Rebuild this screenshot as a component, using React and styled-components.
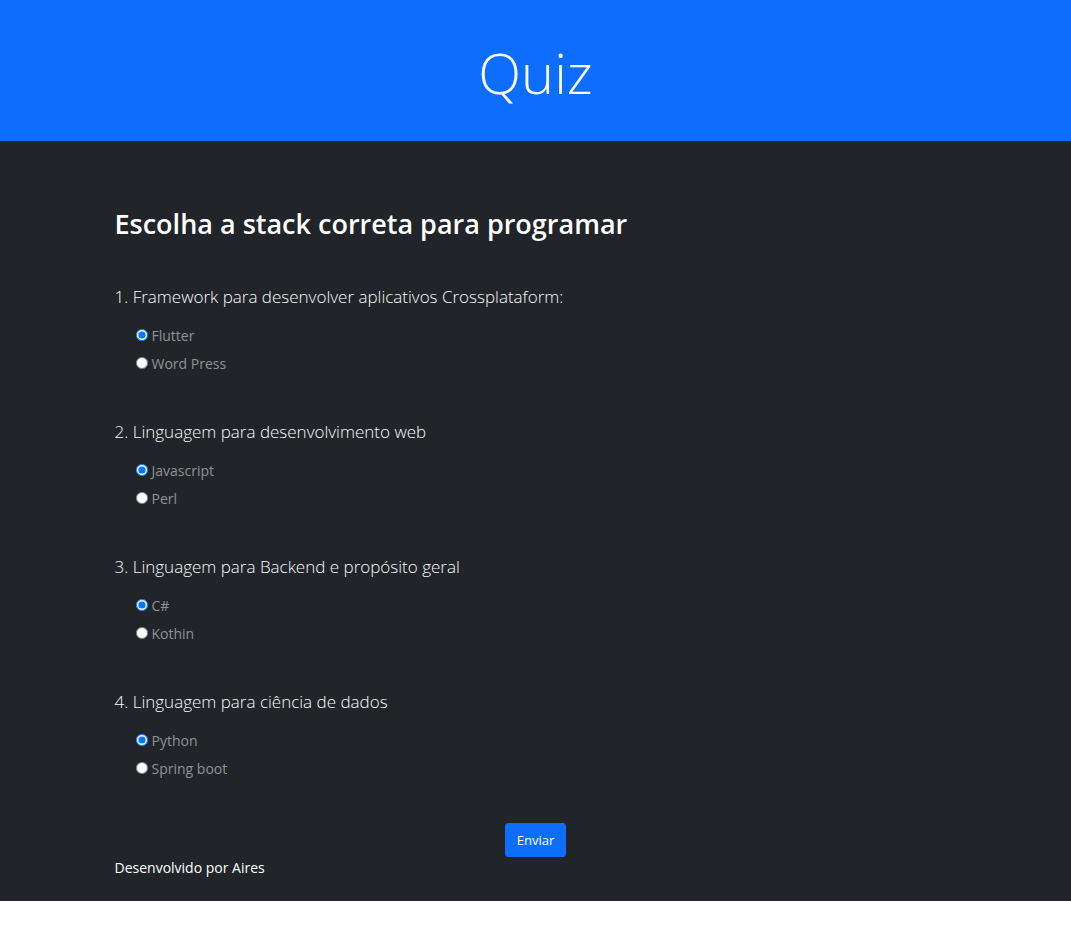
import React from "react";
import styled, { createGlobalStyle } from "styled-components";

const GlobalStyle = createGlobalStyle`
  *, *::before, *::after { box-sizing: border-box; }
  body {
    margin: 0;
    background: #fff;
    color: #fff;
    font-family: "Segoe UI", "Open Sans", "Noto Sans", sans-serif;
    font-size: 14px;
    line-height: 22px;
  }
  h1, h2, p, fieldset { margin: 0; padding: 0; border: 0; }
`;

const Header = styled.header`
  padding: 43px 12px 40px;
  background: #0d6efd;
  text-align: center;
`;

const Title = styled.h1`
  color: #f8f9fa;
  font-size: 56px;
  font-weight: 300;
  line-height: 58px;
`;

const Main = styled.main`
  padding: 64px 0 22px;
  background: #212529;
`;

const Container = styled.div`
  max-width: 864px;
  margin: 0 auto;
  padding: 0 11px;
`;

const Heading = styled.h2`
  font-size: 27px;
  font-weight: 600;
  line-height: 38px;
`;

const Form = styled.form`
  padding-top: 43px;
`;

const Questions = styled.div`
  display: flex;
  flex-direction: column;
  gap: 43px;
`;

const Question = styled.fieldset`
  min-width: 0;
`;

const Prompt = styled.legend`
  padding: 0;
  margin-bottom: 14px;
  color: #f8f9fa;
  font-size: 17px;
  font-weight: 300;
  line-height: 22px;
`;

const Option = styled.div`
  display: flex;
  align-items: center;
  gap: 4px;
  height: 28px;
  padding-left: 21px;
`;

const Radio = styled.input`
  width: 12px;
  height: 12px;
  margin: 0 0 2px;
`;

const OptionLabel = styled.label`
  color: #909294;
`;

const Actions = styled.div`
  display: flex;
  justify-content: center;
  padding-top: 40px;
`;

const SubmitButton = styled.button`
  padding: 5px 11px;
  border: 1px solid #0d6efd;
  border-radius: 3px;
  background: #0d6efd;
  color: #fff;
  font: inherit;
  font-size: 13px;
  cursor: pointer;
`;

const Credit = styled.p`
  font-size: 14px;
`;

const questions = [
  { prompt: "1. Framework para desenvolver aplicativos Crossplataform:", options: ["Flutter", "Word Press"] },
  { prompt: "2. Linguagem para desenvolvimento web", options: ["Javascript", "Perl"] },
  { prompt: "3. Linguagem para Backend e propósito geral", options: ["C#", "Kothin"] },
  { prompt: "4. Linguagem para ciência de dados", options: ["Python", "Spring boot"] },
];

export default function App() {
  return (
    <>
      <GlobalStyle />
      <Header>
        <Title>Quiz</Title>
      </Header>
      <Main>
        <Container>
          <Heading>Escolha a stack correta para programar</Heading>
          <Form onSubmit={(event) => event.preventDefault()}>
            <Questions>
              {questions.map(({ prompt, options }, q) => (
                <Question key={prompt}>
                  <Prompt>{prompt}</Prompt>
                  {options.map((option, o) => (
                    <Option key={option}>
                      <Radio
                        type="radio"
                        id={`q${q}-${o}`}
                        name={`q${q}`}
                        value={option}
                        defaultChecked={o === 0}
                      />
                      <OptionLabel htmlFor={`q${q}-${o}`}>{option}</OptionLabel>
                    </Option>
                  ))}
                </Question>
              ))}
            </Questions>
            <Actions>
              <SubmitButton type="submit">Enviar</SubmitButton>
            </Actions>
          </Form>
          <Credit>Desenvolvido por Aires</Credit>
        </Container>
      </Main>
    </>
  );
}
